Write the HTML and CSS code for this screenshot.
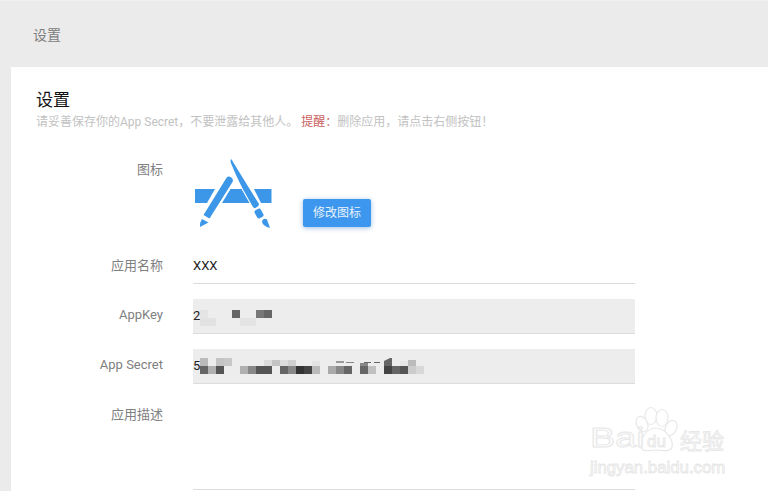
FILE: index.html
```html
<!DOCTYPE html>
<html lang="zh">
<head>
<meta charset="utf-8">
<title>设置</title>
<link rel="stylesheet" href="styles.css">
</head>
<body>
<header class="topbar">设置</header>
<main class="card">
  <h1 class="title">设置</h1>
  <p class="subtitle">请妥善保存你的App Secret，不要泄露给其他人。 <em class="warn">提醒：</em>删除应用，请点击右侧按钮！</p>
  <form class="form">
    <div class="row">
      <label class="label">图标</label>
      <div class="icon-value">
        <svg class="app-icon" viewBox="0 0 80 72" width="80" height="72">
          <g transform="translate(-193 -158)">
            <path d="M195 189H215L207 203H195Z"/>
            <path d="M230.500 189H241.500L249.500 203H222Z"/>
            <path d="M254 189H271.500V203H261Z"/>
            <path d="M227 177Q229 176 231 177.300L232.500 178.800Q233.500 180.500 232.500 182L209.500 218.500L203.500 215Z"/>
            <path d="M202 219L208.500 222.500L200 227Q199.700 222 202 219Z"/>
            <path d="M231 159Q232 159.500 233 162L259 204Q259 206 257 207L255.500 208Q254 208.500 253 207L251 203.500L242.800 189L236 175L230.500 162Q230.500 160 231 159Z"/>
            <rect x="255.500" y="209" width="7" height="9" rx="2" transform="rotate(-28 259 213.500)"/>
            <path d="M263 219.500Q265 218 267 219.500L270 228Q263 226 262 222Q262 220.500 263 219.500Z"/>
          </g>
        </svg>
        <button class="btn" type="button">修改图标</button>
      </div>
    </div>
    <div class="row">
      <label class="label label-name">应用名称</label>
      <div class="field">XXX</div>
    </div>
    <div class="row">
      <label class="label">AppKey</label>
      <div class="field readonly">2
        <svg class="mosaic" width="442" height="34" viewBox="0 0 442 34">
          <rect x="7" y="11" width="8" height="8" fill="#e4e4e4"/>
          <rect x="7" y="19" width="16" height="8" fill="#e2e2e2"/>
          <rect x="39" y="11" width="8" height="8" fill="#666"/>
          <rect x="47" y="19" width="16" height="8" fill="#e4e4e4"/>
          <rect x="63" y="11" width="8" height="8" fill="#777"/>
          <rect x="71" y="11" width="8" height="8" fill="#666"/>
        </svg>
      </div>
    </div>
    <div class="row">
      <label class="label">App Secret</label>
      <div class="field readonly">5
        <svg class="mosaic" width="442" height="34" viewBox="193 349 442 34">
          <rect x="200" y="358" width="8" height="8" fill="#bbb"/>
          <rect x="216" y="358" width="8" height="8" fill="#c4c4c4"/>
          <rect x="224" y="358" width="8" height="8" fill="#c8c8c8"/>
          <rect x="264" y="360" width="8" height="6" fill="#dcdcdc"/>
          <rect x="272" y="360" width="8" height="6" fill="#c4c4c4"/>
          <rect x="280" y="360" width="8" height="6" fill="#dedede"/>
          <rect x="288" y="360" width="8" height="6" fill="#d0d0d0"/>
          <rect x="200" y="366" width="8" height="8" fill="#666"/>
          <rect x="208" y="366" width="8" height="8" fill="#b0b0b0"/>
          <rect x="216" y="366" width="8" height="8" fill="#555"/>
          <rect x="240" y="366" width="8" height="8" fill="#b0b0b0"/>
          <rect x="248" y="366" width="8" height="8" fill="#888"/>
          <rect x="256" y="366" width="16" height="8" fill="#555"/>
          <rect x="280" y="366" width="8" height="8" fill="#666"/>
          <rect x="288" y="366" width="8" height="8" fill="#888"/>
          <rect x="296" y="366" width="8" height="8" fill="#333"/>
          <rect x="304" y="366" width="8" height="8" fill="#444"/>
          <rect x="312" y="366" width="8" height="8" fill="#bbb"/>
          <rect x="312" y="361" width="8" height="5" fill="#e4e4e4"/>
          <rect x="328" y="366" width="8" height="8" fill="#aaa"/>
          <rect x="336" y="366" width="8" height="8" fill="#888"/>
          <rect x="344" y="366" width="8" height="8" fill="#666"/>
          <rect x="360" y="366" width="8" height="8" fill="#666"/>
          <rect x="368" y="366" width="8" height="8" fill="#c0c0c0"/>
          <rect x="360" y="363" width="8" height="3" fill="#888"/>
          <rect x="336" y="361" width="8" height="2" fill="#999"/>
          <rect x="346" y="362" width="8" height="1" fill="#888"/>
          <rect x="364" y="362" width="7" height="1" fill="#666"/>
          <rect x="374" y="362" width="6" height="1" fill="#666"/>
          <rect x="384" y="366" width="8" height="8" fill="#444"/>
          <path d="M384 366V361L390 358H392V366Z" fill="#666"/>
          <rect x="392" y="366" width="8" height="8" fill="#666"/>
          <rect x="400" y="366" width="8" height="8" fill="#555"/>
          <rect x="400" y="361" width="8" height="5" fill="#e6e6e6"/>
          <rect x="408" y="366" width="8" height="8" fill="#ccc"/>
          <rect x="408" y="360" width="8" height="6" fill="#bbb"/>
          <rect x="416" y="366" width="8" height="8" fill="#d8d8d8"/>
        </svg>
      </div>
    </div>
    <div class="row">
      <label class="label">应用描述</label>
      <div class="field textarea"></div>
    </div>
  </form>
</main>
<svg class="watermark" width="145" height="80" viewBox="585 400 145 80">
  <g class="wm-shape">
    <ellipse cx="651" cy="416" rx="6" ry="8.500"/>
    <ellipse cx="662" cy="418" rx="6" ry="8.500"/>
    <ellipse cx="642" cy="424" rx="5.500" ry="8" transform="rotate(-25 642 424)"/>
    <ellipse cx="671" cy="428" rx="5.500" ry="8" transform="rotate(25 671 428)"/>
    <path d="M656 428C665 428 674 440 672 447C670 453 662 450 656 450C650 450 643 453 641 447C639 439 647 428 656 428Z"/>
  </g>
  <text class="wm-text wm-bai" transform="translate(590 447) scale(1.350 1)">Bai</text>
  <text class="wm-text wm-du" x="647" y="447">du</text>
  <text class="wm-text wm-cn" x="680" y="449">经验</text>
  <text class="wm-text wm-url" x="590" y="473">jingyan.baidu.com</text>
</svg>
</body>
</html>
```
FILE: styles.css
```css
* {
  box-sizing: border-box;
}

html,
body {
  margin: 0;
  height: 491px;
  overflow: hidden;
}

body {
  position: relative;
  display: flex;
  flex-direction: column;
  background: #ecebec;
  font-family: Roboto, "Noto Sans CJK SC", sans-serif;
  color: #333;
}

.topbar {
  height: 67px;
  flex: none;
  padding: 24px 0 0 33px;
  font-size: 14px;
  line-height: 20px;
  color: #7d7d7d;
  border-top: 1px solid #f0f0f0;
}

.card {
  flex: 1;
  margin-left: 11px;
  padding: 23px 0 0 25px;
  background: #fff;
}

.title {
  margin: 0;
  font-size: 17px;
  line-height: 20px;
  font-weight: 400;
  color: #111;
}

.subtitle {
  margin: 3px 0 0;
  font-size: 12px;
  line-height: 18px;
  color: #c2c2c2;
}

.warn {
  font-style: normal;
  color: #c9605f;
}

.form {
  display: flex;
  flex-direction: column;
  gap: 15px;
  margin-top: 23px;
}

.row {
  display: grid;
  grid-template-columns: 127px 442px;
  column-gap: 30px;
}

.label {
  padding-top: 6px;
  font-size: 13px;
  line-height: 20px;
  text-align: right;
  color: #808080;
}

.label-name {
  padding-top: 7px;
}

.icon-value {
  display: flex;
  align-items: flex-end;
  height: 80px;
}

.app-icon {
  display: block;
  flex: none;
  fill: #3d97e8;
  margin: 0 30px 4px 0;
}

.btn {
  width: 68px;
  height: 28px;
  margin-bottom: 7px;
  padding: 0;
  border: 0;
  border-radius: 2px;
  background: #3d97ee;
  box-shadow: 0 1px 5px rgba(40, 110, 190, 0.45);
  font: 12px/28px Roboto, "Noto Sans CJK SC", sans-serif;
  color: #e8f2fc;
}

.field {
  position: relative;
  height: 35px;
  padding-top: 7px;
  font-size: 13px;
  line-height: 20px;
  color: #222;
  border-bottom: 1px solid #dcdcdc;
}

.readonly {
  background: #ededed;
}

.textarea {
  height: 91px;
}

.mosaic {
  position: absolute;
  left: 0;
  top: 0;
}

.watermark {
  position: absolute;
  left: 585px;
  top: 400px;
}

.wm-shape {
  fill: #fff;
  stroke: #e8e8e8;
  stroke-width: 1.200;
}

.wm-text {
  fill: #fcfcfc;
  stroke: #e6e6e6;
  stroke-width: 0.800;
  font-family: "Liberation Sans", "Noto Sans CJK SC", sans-serif;
}

.wm-bai {
  font-size: 28px;
}

.wm-du {
  font-size: 17px;
}

.wm-cn {
  font-size: 22px;
}

.wm-url {
  font-size: 16.800px;
}
```
